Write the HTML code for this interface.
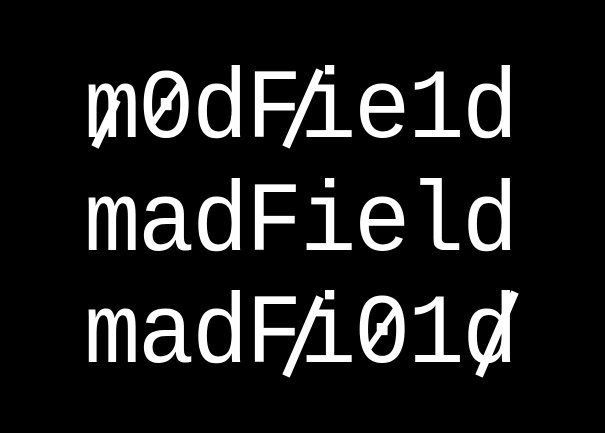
<!DOCTYPE html>
<html><head><style>
html,body{margin:0;padding:0;background:#000;width:605px;height:433px;overflow:hidden}
</style></head><body>
<svg width="605" height="433" viewBox="0 0 605 433" xmlns="http://www.w3.org/2000/svg">
<rect width="605" height="433" fill="#000"/>
<g fill="#fff" font-family="'Liberation Mono', monospace" font-size="94" letter-spacing="-2.4">
<text transform="translate(84,137) scale(1,1.06)">m0dFie1d</text>
<text transform="translate(84,250) scale(1,1.06)">madField</text>
<text transform="translate(84,362) scale(1,1.06)">madFi01d</text>
</g>
<g stroke="#fff" stroke-width="8" stroke-linecap="butt">
<line x1="95" y1="147" x2="117" y2="100"/>
<line x1="286" y1="147" x2="320" y2="70"/>
<line x1="286" y1="376" x2="320" y2="297"/>
<line x1="479" y1="376" x2="515" y2="292"/>
</g>
<g stroke="#fff" stroke-width="6">
<line x1="152" y1="124" x2="180" y2="84"/>
<line x1="368" y1="349" x2="396" y2="309"/>
</g>
</svg>
</body></html>
